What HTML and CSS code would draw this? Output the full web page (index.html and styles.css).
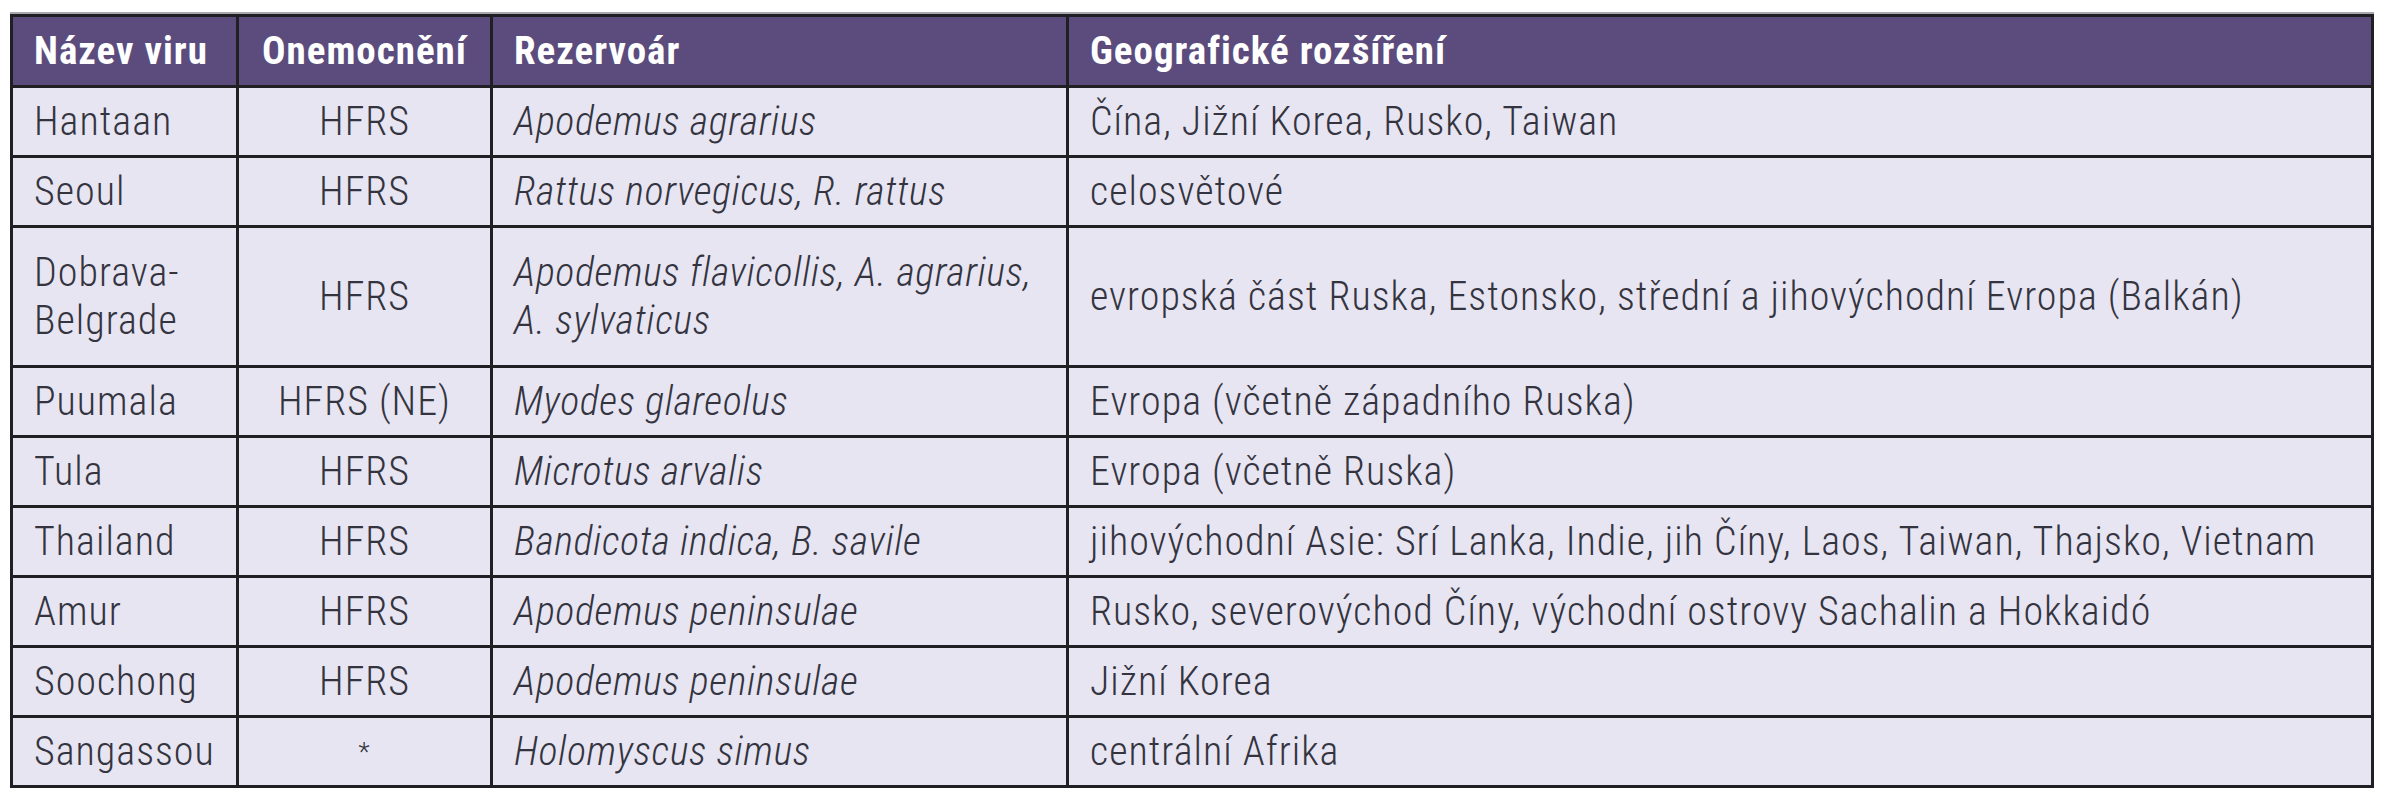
FILE: index.html
```html
<!DOCTYPE html>
<html lang="cs">
<head>
<meta charset="utf-8">
<title>Hantaviry</title>
<link rel="stylesheet" href="styles.css">
</head>
<body>
<div class="wrap">
<table class="virus-table">
  <colgroup>
    <col class="c-name">
    <col class="c-disease">
    <col class="c-reservoir">
    <col class="c-geo">
  </colgroup>
  <thead>
    <tr class="head-row">
      <th class="left">Název viru</th>
      <th class="center">Onemocnění</th>
      <th class="left">Rezervoár</th>
      <th class="left">Geografické rozšíření</th>
    </tr>
  </thead>
  <tbody>
    <tr class="single"><td>Hantaan</td><td class="center">HFRS</td><td class="it">Apodemus agrarius</td><td>Čína, Jižní Korea, Rusko, Taiwan</td></tr>
    <tr class="single"><td>Seoul</td><td class="center">HFRS</td><td class="it">Rattus norvegicus, R. rattus</td><td>celosvětové</td></tr>
    <tr class="double"><td>Dobrava-<br>Belgrade</td><td class="center">HFRS</td><td class="it">Apodemus flavicollis, A. agrarius,<br>A. sylvaticus</td><td>evropská část Ruska, Estonsko, střední a jihovýchodní Evropa (Balkán)</td></tr>
    <tr class="single"><td>Puumala</td><td class="center">HFRS (NE)</td><td class="it">Myodes glareolus</td><td>Evropa (včetně západního Ruska)</td></tr>
    <tr class="single"><td>Tula</td><td class="center">HFRS</td><td class="it">Microtus arvalis</td><td>Evropa (včetně Ruska)</td></tr>
    <tr class="single"><td>Thailand</td><td class="center">HFRS</td><td class="it">Bandicota indica, B. savile</td><td>jihovýchodní Asie: Srí Lanka, Indie, jih Číny, Laos, Taiwan, Thajsko, Vietnam</td></tr>
    <tr class="single"><td>Amur</td><td class="center">HFRS</td><td class="it">Apodemus peninsulae</td><td>Rusko, severovýchod Číny, východní ostrovy Sachalin a Hokkaidó</td></tr>
    <tr class="single"><td>Soochong</td><td class="center">HFRS</td><td class="it">Apodemus peninsulae</td><td>Jižní Korea</td></tr>
    <tr class="single"><td>Sangassou</td><td class="center star">*</td><td class="it">Holomyscus simus</td><td>centrální Afrika</td></tr>
  </tbody>
</table>
</div>
</body>
</html>
```

FILE: styles.css
```css
html, body {
  margin: 0;
  padding: 0;
  background: #ffffff;
}

.wrap {
  padding: 14px 12px 0 10px;
}

.virus-table {
  width: 2364px;
  border-collapse: collapse;
  table-layout: fixed;
  font-family: "Roboto Condensed", "DejaVu Sans Condensed", "Liberation Sans Narrow", Roboto, sans-serif;
  font-size: 40px;
  font-weight: 300;
  letter-spacing: 1px;
  color: #34343f;
  background: #e7e5f2;
  box-shadow: 0 -2px 0 #a8a8ae;
}

.c-name { width: 226px; }
.c-disease { width: 254px; }
.c-reservoir { width: 576px; }
.c-geo { width: auto; }

.virus-table th,
.virus-table td {
  border: 3px solid #202024;
  padding: 0 21px;
  vertical-align: middle;
  line-height: 40px;
  white-space: nowrap;
}

.head-row {
  height: 71px;
}

.virus-table th {
  background: #5b4c7d;
  color: #ffffff;
  font-size: 39px;
  font-weight: 700;
  letter-spacing: 1px;
  padding: 0 14px 0 21px;
}

.virus-table th.center {
  padding: 0 10px;
}

.single { height: 70px; }
.double { height: 140px; }

.double td {
  line-height: 48px;
}

.left { text-align: left; }
.center { text-align: center; }

.it {
  font-style: italic;
  letter-spacing: 0.6px;
}

.star {
  font-size: 26px;
}
```
